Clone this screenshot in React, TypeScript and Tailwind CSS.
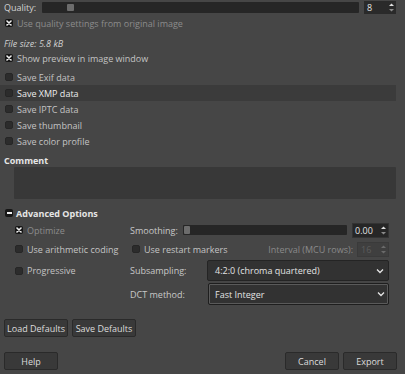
import React from 'react';

const font = { fontFamily: '"Open Sans", "Noto Sans", sans-serif' };

function Check({ checked = false }: { checked?: boolean }) {
  return (
    <span
      className={`inline-flex items-center justify-center w-[8px] h-[8px] rounded-[2px] flex-shrink-0 ${
        checked ? 'bg-[#161616]' : 'bg-[#2c2c2c] border border-[#262626]'
      }`}
    >
      {checked && (
        <svg width="6" height="6" viewBox="0 0 6 6">
          <path d="M1 1L5 5M5 1L1 5" stroke="#f0f0f0" strokeWidth="1.6" strokeLinecap="round" />
        </svg>
      )}
    </span>
  );
}

function CheckRow({
  label,
  checked,
  dim,
  bright,
  className = '',
}: {
  label: string;
  checked?: boolean;
  dim?: boolean;
  bright?: boolean;
  className?: string;
}) {
  return (
    <div className={`flex items-center gap-[4px] ${className}`}>
      <Check checked={checked} />
      <span className={dim ? 'text-[#8c8c8c]' : bright ? 'text-[#ececec]' : 'text-[#c4c4c4]'}>{label}</span>
    </div>
  );
}

function Arrows({ dim }: { dim?: boolean }) {
  return (
    <div className="flex flex-col justify-center gap-[1px] w-[7px]">
      <svg width="7" height="5" viewBox="0 0 7 5">
        <path d="M1 4L3.5 1.5L6 4Z" fill={dim ? '#6a6a6a' : '#e0e0e0'} />
      </svg>
      <svg width="7" height="5" viewBox="0 0 7 5">
        <path d="M1 1L3.5 3.5L6 1Z" fill={dim ? '#6a6a6a' : '#8a8a8a'} />
      </svg>
    </div>
  );
}

function Chevron() {
  return (
    <svg width="8" height="6" viewBox="0 0 8 6">
      <path d="M1 1.5L4 4.5L7 1.5" stroke="#e6e6e6" strokeWidth="1.3" fill="none" />
    </svg>
  );
}

function Button({ label, className = '' }: { label: string; className?: string }) {
  return (
    <div
      className={`flex items-center justify-center rounded-[2px] bg-[#393939] border border-[#2a2a2a] text-[#dcdcdc] ${className}`}
    >
      {label}
    </div>
  );
}

export default function App() {
  return (
    <div className="w-[405px] h-[374px] bg-[#464646] text-[9px] leading-none overflow-hidden" style={font}>
      {/* Quality */}
      <div className="flex items-center h-[14px] pl-[4px] pr-[9px]">
        <span className="text-[#d2d2d2] w-[38px]">Quality:</span>
        <div className="relative flex-1 h-[11px] bg-[#262626] rounded-[1px]">
          <div className="absolute left-[25px] top-[2px] w-[7px] h-[7px] rounded-[1px] bg-[#6c6c6c]" />
        </div>
        <div className="ml-[5px] w-[32px] h-[13px] bg-[#2a2a2a] flex items-center justify-between pl-[3px] pr-[1px]">
          <span className="text-[#e4e4e4]">8</span>
          <Arrows />
        </div>
      </div>

      <CheckRow label="Use quality settings from original image" checked dim className="h-[14px] mt-[2px] pl-[5px]" />

      <div className="h-[14px] mt-[6px] pl-[4px] flex items-center italic text-[#cfcfcf]">File size: 5.8 kB</div>

      <CheckRow label="Show preview in image window" checked className="h-[16px] pl-[5px]" />

      <div className="mt-[3px] flex flex-col">
        <CheckRow label="Save Exif data" className="h-[16px] pl-[5px]" />
        <CheckRow label="Save XMP data" bright className="h-[16px] pl-[5px] mr-[9px] bg-[#3b3b3b]" />
        <CheckRow label="Save IPTC data" className="h-[16px] pl-[5px]" />
        <CheckRow label="Save thumbnail" className="h-[16px] pl-[5px]" />
        <CheckRow label="Save color profile" className="h-[16px] pl-[5px]" />
      </div>

      {/* Comment */}
      <div className="h-[14px] mt-[4px] pl-[4px] flex items-center font-bold text-[#e6e6e6]">Comment</div>
      <div className="ml-[14px] mr-[9px] h-[32px] bg-[#383838] rounded-[1px]" />

      {/* Advanced */}
      <div className="h-[14px] mt-[7px] pl-[5px] flex items-center gap-[3px] font-bold text-[#e6e6e6]">
        <span className="w-[8px] h-[8px] rounded-[2px] bg-[#161616] flex items-center justify-center">
          <span className="w-[5px] h-[1.5px] bg-[#f0f0f0]" />
        </span>
        <span>Advanced Options</span>
      </div>

      <div className="pl-[15px] pr-[16px]">
        {/* Optimize / Smoothing */}
        <div className="flex items-center h-[16px] mt-[2px]">
          <CheckRow label="Optimize" checked dim className="w-[115px]" />
          <span className="text-[#c8c8c8] w-[53px]">Smoothing:</span>
          <div className="relative flex-1 h-[10px] bg-[#262626] rounded-[1px]">
            <div className="absolute left-[1px] top-[1px] w-[6px] h-[8px] rounded-[1px] bg-[#6c6c6c]" />
          </div>
          <div className="ml-[5px] w-[37px] h-[15px] bg-[#262626] border border-[#333] flex items-center justify-between pl-[2px] pr-[1px]">
            <span className="text-[#e4e4e4]">0.00</span>
            <Arrows />
          </div>
        </div>

        {/* Arithmetic / Restart */}
        <div className="flex items-center h-[16px] mt-[3px]">
          <CheckRow label="Use arithmetic coding" className="w-[117px]" />
          <CheckRow label="Use restart markers" />
          <span className="ml-auto text-[#8a8a8a]">Interval (MCU rows):</span>
          <div className="ml-[4px] w-[32px] h-[15px] bg-[#3f3f3f] border border-[#3a3a3a] flex items-center justify-between pl-[3px] pr-[1px]">
            <span className="text-[#5c5c5c]">16</span>
            <Arrows dim />
          </div>
        </div>

        {/* Progressive / Subsampling */}
        <div className="flex items-center h-[21px] mt-[3px]">
          <CheckRow label="Progressive" className="w-[115px]" />
          <span className="text-[#c8c8c8] w-[77px]">Subsampling:</span>
          <div className="flex-1 h-[21px] bg-[#323232] border border-[#242424] rounded-[2px] flex items-center justify-between pl-[7px] pr-[4px] text-[#e2e2e2]">
            <span>4:2:0 (chroma quartered)</span>
            <Chevron />
          </div>
        </div>

        {/* DCT method */}
        <div className="flex items-center h-[22px] mt-[2px]">
          <span className="w-[115px]" />
          <span className="text-[#c8c8c8] w-[78px]">DCT method:</span>
          <div className="flex-1 h-[22px] bg-[#323232] border border-[#1e1e1e] rounded-[2px] flex items-center justify-between pl-[6px] pr-[3px] text-[#e2e2e2] outline outline-1 outline-[#5a5a5a] -outline-offset-2">
            <span>Fast Integer</span>
            <Chevron />
          </div>
        </div>
      </div>

      {/* Defaults */}
      <div className="flex gap-[4px] pl-[4px] mt-[14px]">
        <Button label="Load Defaults" className="w-[64px] h-[18px]" />
        <Button label="Save Defaults" className="w-[64px] h-[18px]" />
      </div>

      {/* Bottom buttons */}
      <div className="flex pl-[4px] pr-[8px] mt-[15px]">
        <Button label="Help" className="w-[54px] h-[18px]" />
        <div className="ml-auto flex gap-[4px]">
          <Button label="Cancel" className="w-[54px] h-[18px]" />
          <Button label="Export" className="w-[54px] h-[18px]" />
        </div>
      </div>
    </div>
  );
}
